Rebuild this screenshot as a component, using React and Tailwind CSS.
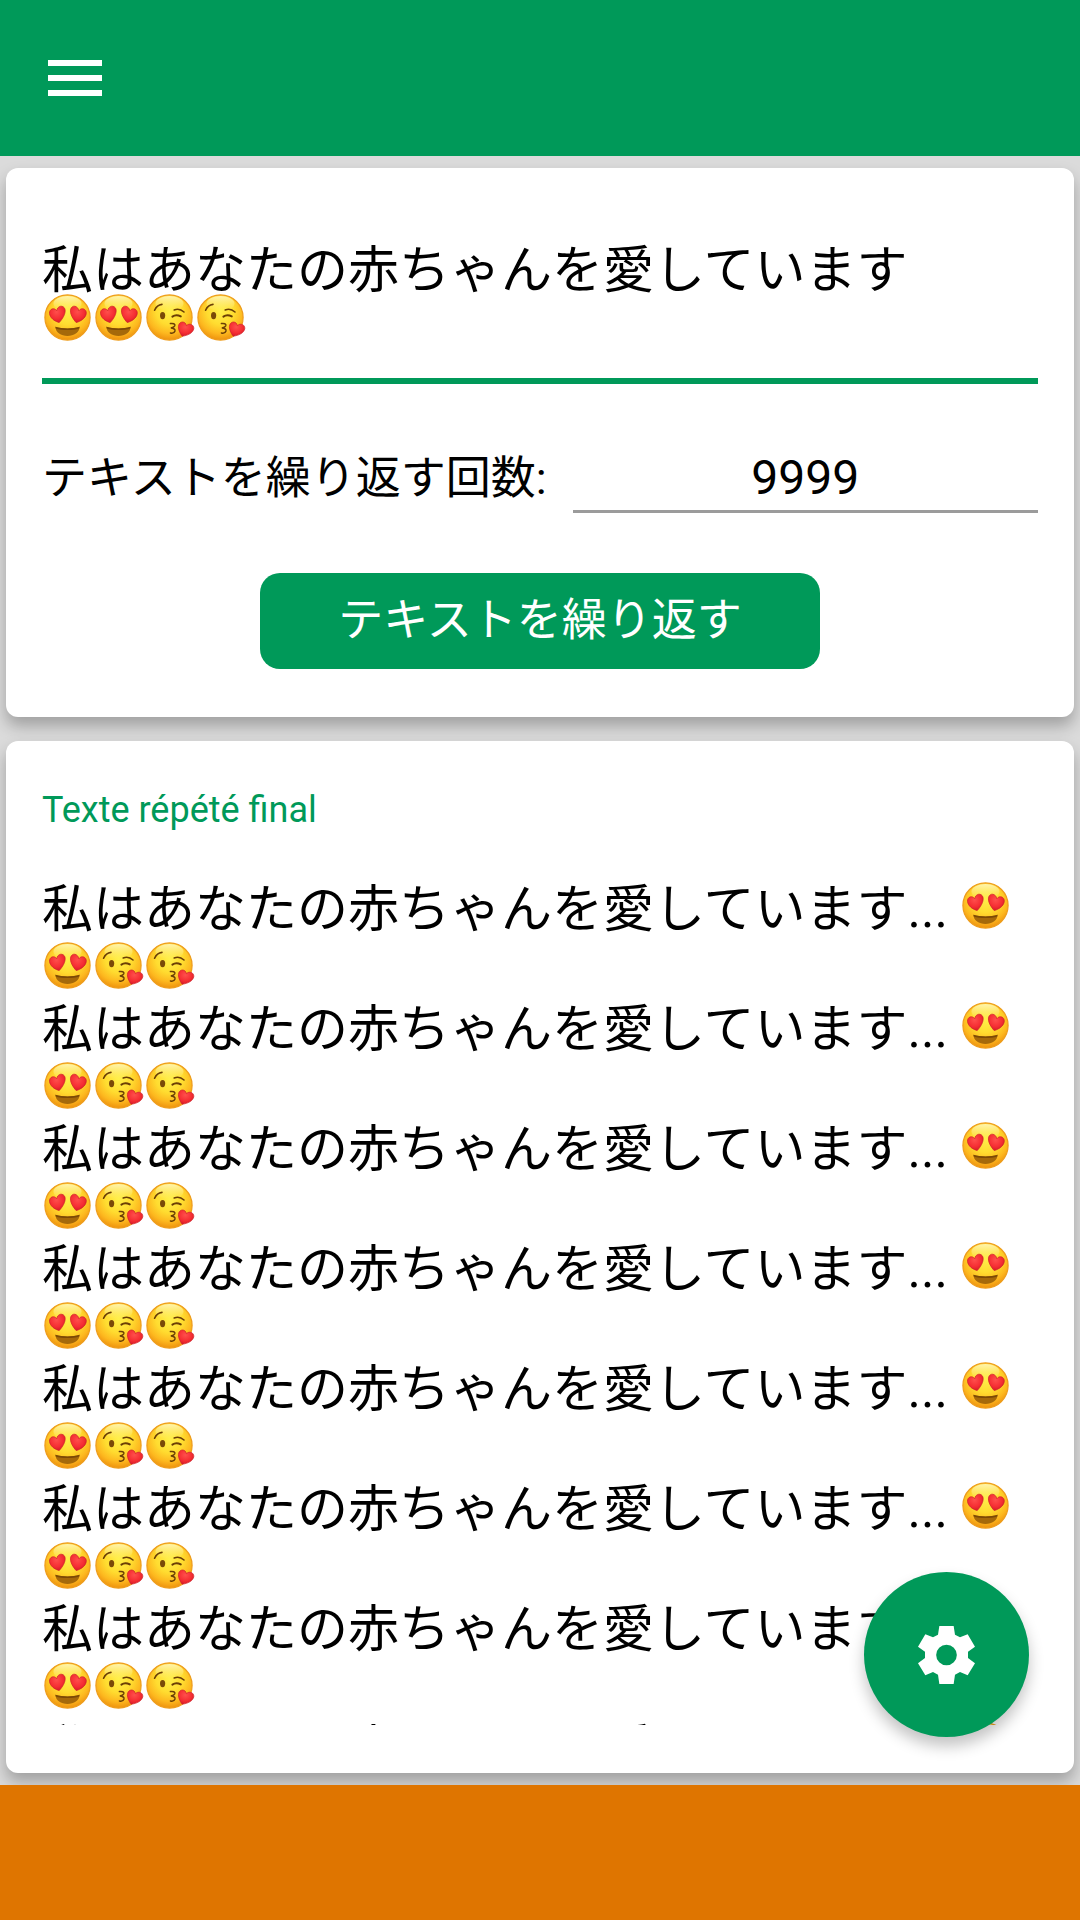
import React, { useState } from "react";

const REPEATED_ROWS = 8;

// Shared by every emoji on the page
function EmojiGradients() {
  return (
    <svg className="absolute size-0" aria-hidden="true">
      <defs>
        <radialGradient id="face" cx="0.5" cy="0.36" r="0.66">
          <stop offset="0" stopColor="#fff04a" />
          <stop offset="0.45" stopColor="#ffdc30" />
          <stop offset="0.75" stopColor="#fdb81f" />
          <stop offset="1" stopColor="#ec8d0c" />
        </radialGradient>
        <linearGradient id="shine" x1="0" y1="0" x2="0" y2="1">
          <stop offset="0" stopColor="#fffbd0" stopOpacity="0.8" />
          <stop offset="1" stopColor="#fff59a" stopOpacity="0" />
        </linearGradient>
        <radialGradient id="heart" cx="0.45" cy="0.35" r="0.7">
          <stop offset="0" stopColor="#ff4f4c" />
          <stop offset="0.6" stopColor="#f52e33" />
          <stop offset="1" stopColor="#d01828" />
        </radialGradient>
      </defs>
    </svg>
  );
}

function Face() {
  return (
    <>
      <circle cx="25.5" cy="25.5" r="22.6" fill="url(#face)" stroke="#ee9d1c" strokeWidth="1.2" />
      <ellipse cx="25.5" cy="11.5" rx="14" ry="7.5" fill="url(#shine)" />
    </>
  );
}

function HeartEyes() {
  return (
    <svg viewBox="0 0 51 51" role="img" aria-label="😍" className="size-[51px] shrink-0">
      <Face />
      <path d="M13.4 34.8 C20 37 31 37 37.6 34.8 C37.4 40.6 32 44 25.5 44 C19 44 13.6 40.6 13.4 34.8Z" fill="#a5690a" />
      <path d="M13.4 34.8 C20 37 31 37 37.6 34.8 L37.2 36.4 C31 38.4 20 38.4 13.8 36.4Z" fill="#7c4a06" />
      <g fill="url(#heart)" stroke="#cf2228" strokeWidth="0.7">
        <path d="M17.2 30.6 C12.4 29.2 8 26 7.5 21.4 C7.1 16.8 12.4 15 14.7 18.8 C15.4 13.4 21.6 12.6 23 17.2 C24 21.8 20.4 27 17.2 30.6Z" />
        <path d="M34.2 30.6 C39 29.2 43.8 26 44.3 21.4 C44.7 16.8 39.2 15 36.8 18.8 C36 13.4 29.9 12.6 28.6 17.2 C27.6 21.8 31 27 34.2 30.6Z" />
      </g>
    </svg>
  );
}

function BlowKiss() {
  return (
    <svg viewBox="0 0 51 51" role="img" aria-label="😘" className="size-[51px] shrink-0 overflow-visible">
      <Face />
      <g fill="none" stroke="#6b3f06" strokeLinecap="round">
        <path d="M10.6 18.2 C12 15 14.6 12.8 18 12.4" strokeWidth="1.6" />
        <path d="M30.2 18 C33.4 16.6 37.4 17.6 40 20" strokeWidth="1.6" />
        <path d="M28.4 24.6 C30.6 23 34 23 36.8 24.4" strokeWidth="2" />
        <path
          d="M26.4 31.6 C29 31 31.4 32 30.8 33.8 C30.2 35.4 28 35.8 26.8 36 C29 36 31.4 37 31 39 C30.4 40.8 28.2 41.4 26.4 41"
          strokeWidth="1.5"
        />
      </g>
      <ellipse cx="18.6" cy="23.6" rx="2.6" ry="3.7" fill="#7a4a08" />
      <path
        d="M38.2 44.2 C35.8 41 33.8 37 34.6 33.2 C35.9 28.8 41.6 29 42.4 33.6 C45.4 30.8 50 32.4 49.8 36.6 C49.2 41 43.6 43.6 38.2 44.2Z"
        fill="url(#heart)"
        stroke="#cf2228"
        strokeWidth="0.7"
      />
    </svg>
  );
}

function GearIcon() {
  return (
    <svg viewBox="0 0 171 174" className="h-[58px] w-[57px]" fill="currentColor" aria-hidden="true">
      <path
        fillRule="evenodd"
        d="M64 0H107L111 26L126 34L149 25L171 62L150 77V96L171 112L149 148L126 138L111 146L107 174H64L60 146L45 138L22 148L0 112L21 96V77L0 62L22 25L45 34L60 26ZM85.500 56A31 31 0 1 0 85.500 118A31 31 0 1 0 85.500 56Z"
      />
    </svg>
  );
}

function Card({ className, children }) {
  return (
    <section
      className={[
        "mx-1.5 rounded-xl bg-white px-9 shadow-[0_9px_16px_rgba(0,0,0,0.27)]",
        className
      ].join(" ")}
    >
      {children}
    </section>
  );
}

export default function App() {
  const [text, setText] = useState("私はあなたの赤ちゃんを愛しています");
  const [count, setCount] = useState("9999");

  return (
    <div className="flex h-screen flex-col bg-[#dbdbdb] font-[Roboto,'Noto_Sans_CJK_JP',sans-serif] text-black">
      <EmojiGradients />

      <header className="flex h-[156px] shrink-0 items-center bg-[#009959] px-12">
        <button type="button" aria-label="Menu" className="flex flex-col gap-[9px]">
          <span className="h-1.5 w-[54px] bg-white" />
          <span className="h-1.5 w-[54px] bg-white" />
          <span className="h-1.5 w-[54px] bg-white" />
        </button>
      </header>

      <main className="flex min-h-0 flex-1 flex-col gap-6 py-3">
        <Card className="shrink-0 pt-[72px] pb-12">
          <div className="relative">
            <textarea
              aria-label="テキスト"
              rows={2}
              className="block h-[144px] w-full resize-none overflow-hidden border-b-6 border-[#009959] pt-[5px] text-[51px] leading-[51px] outline-none"
              value={text}
              onChange={(e) => setText(e.target.value)}
            />
            {/* emoji line sits over the second row of the text box */}
            <div className="pointer-events-none absolute top-[52px] left-0 flex">
              <HeartEyes />
              <HeartEyes />
              <BlowKiss />
              <BlowKiss />
            </div>
          </div>

          <div className="mt-[60px] flex items-center gap-[26px]">
            <label htmlFor="count" className="text-[45px] leading-[69px]">
              テキストを繰り返す回数:
            </label>
            <input
              id="count"
              type="text"
              inputMode="numeric"
              className="h-[69px] min-w-0 flex-1 border-b-3 border-[#9b9b9b] pt-0.5 text-center text-[48px] outline-none"
              value={count}
              onChange={(e) => setCount(e.target.value)}
            />
          </div>

          <div className="mt-15 flex justify-center">
            <button
              type="button"
              className="h-24 rounded-[20px] bg-[#009959] px-[78px] text-[45px] leading-[60px] text-white"
            >
              テキストを繰り返す
            </button>
          </div>
        </Card>

        <Card className="flex min-h-0 flex-1 flex-col pt-12 pb-12">
          <h2 className="shrink-0 text-[36px] leading-[42px] text-[#009959]">Texte répété final</h2>
          <div className="mt-[49px] min-h-0 flex-1 overflow-hidden text-[51px] leading-[60px]">
            {Array.from({ length: REPEATED_ROWS }, (_, i) => (
              <div key={i}>
                <div className="flex h-[60px] whitespace-pre">
                  {text}... <HeartEyes />
                </div>
                <div className="flex h-[60px]">
                  <HeartEyes />
                  <BlowKiss />
                  <BlowKiss />
                </div>
              </div>
            ))}
          </div>
        </Card>
      </main>

      <footer className="relative h-[135px] shrink-0 bg-[#df7500]" />

      <button
        type="button"
        aria-label="Settings"
        className="fixed right-[51px] bottom-[183px] flex size-[165px] items-center justify-center rounded-full bg-[#009959] text-white shadow-[0_9px_15px_rgba(0,0,0,0.24)]"
      >
        <GearIcon />
      </button>
    </div>
  );
}
